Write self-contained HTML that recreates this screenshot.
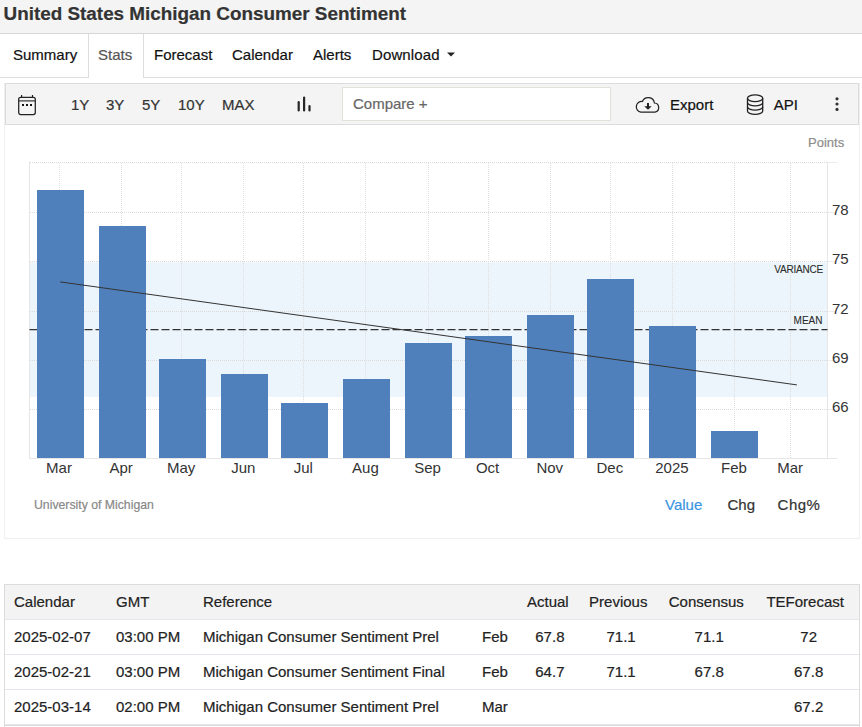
<!DOCTYPE html>
<html><head><meta charset="utf-8">
<style>
html,body{margin:0;padding:0;}
body{width:862px;height:727px;overflow:hidden;position:relative;background:#fff;font-family:"Liberation Sans",sans-serif;color:#222;}
.a{-webkit-text-stroke:0.2px currentColor;}
.a{position:absolute;white-space:nowrap;line-height:1;}
.f15{font-size:15px;}
#hdr{position:absolute;left:0;top:0;width:862px;height:33px;background:#f4f4f4;border-bottom:1px solid #d6d6d6;}
#title{left:3.6px;top:4.5px;font-size:18.87px;font-weight:bold;color:#333;}
#navline{position:absolute;left:0;top:77px;width:862px;height:1px;background:#ddd;}
#stats{position:absolute;left:88px;top:34px;width:54px;height:44px;background:#fff;border-left:1px solid #ddd;border-right:1px solid #ddd;}
#panel{position:absolute;left:4px;top:83px;width:854px;height:455px;border:1px solid #efefef;border-top:none;}
#tb{position:absolute;left:5px;top:83px;width:852px;height:40px;background:#f4f4f4;border:1px solid #dcdcdc;}
#cmp{position:absolute;left:342px;top:87px;width:267px;height:32px;background:#fff;border:1px solid #e2e2d9;}
#tbl{position:absolute;left:4px;top:584px;width:854px;height:160px;border:1px solid #dcdcdc;}
.row{position:absolute;left:5px;width:854px;height:1px;background:#e3e6ea;}
</style></head><body>
<div id="hdr"></div>
<div class="a" id="title">United States Michigan Consumer Sentiment</div>
<div id="navline"></div>
<div id="stats"></div>
<div class="a f15" style="left:13px;top:47px;color:#111;">Summary</div>
<div class="a f15" style="left:98px;top:47px;color:#555;">Stats</div>
<div class="a f15" style="left:154px;top:47px;color:#111;">Forecast</div>
<div class="a f15" style="left:232px;top:47px;color:#111;">Calendar</div>
<div class="a f15" style="left:313px;top:47px;color:#111;">Alerts</div>
<div class="a f15" style="left:372px;top:47px;color:#111;letter-spacing:0.12px;">Download</div>
<svg class="a" style="left:446px;top:52px" width="10" height="5"><path d="M1 0.5 H9 L5 4.5 Z" fill="#222"/></svg>

<div id="panel"></div>
<div id="tb"></div>
<!-- calendar icon -->
<svg class="a" style="left:16px;top:93px" width="22" height="24" viewBox="0 0 22 24">
<rect x="2.7" y="4.3" width="16.6" height="17.3" rx="2" fill="none" stroke="#222" stroke-width="1.25"/>
<line x1="2.7" y1="7.9" x2="19.3" y2="7.9" stroke="#222" stroke-width="1.1"/>
<line x1="5.6" y1="2" x2="5.6" y2="4.5" stroke="#222" stroke-width="1.2"/>
<line x1="16.5" y1="2" x2="16.5" y2="4.5" stroke="#222" stroke-width="1.2"/>
<rect x="6" y="11" width="2" height="2" fill="#111"/>
<rect x="10" y="11" width="2" height="2" fill="#111"/>
<rect x="14" y="11" width="2" height="2" fill="#111"/>
</svg>
<div class="a f15" style="left:71px;top:97px;color:#333;">1Y</div>
<div class="a f15" style="left:106px;top:97px;color:#333;">3Y</div>
<div class="a f15" style="left:142px;top:97px;color:#333;">5Y</div>
<div class="a f15" style="left:178px;top:97px;color:#333;">10Y</div>
<div class="a f15" style="left:222px;top:97px;color:#333;">MAX</div>
<svg class="a" style="left:294px;top:93px" width="20" height="22" viewBox="0 0 20 22">
<line x1="4.7" y1="9.2" x2="4.7" y2="17.4" stroke="#262626" stroke-width="2.2" stroke-linecap="round"/>
<line x1="10.1" y1="4.5" x2="10.1" y2="17.4" stroke="#262626" stroke-width="2.2" stroke-linecap="round"/>
<line x1="15.5" y1="13" x2="15.5" y2="17.4" stroke="#262626" stroke-width="2.2" stroke-linecap="round"/>
</svg>
<div id="cmp"></div>
<div class="a f15" style="left:353px;top:96px;color:#666;">Compare +</div>
<!-- cloud icon -->
<svg class="a" style="left:630px;top:90px" width="36" height="28" viewBox="630 90 36 28">
<path d="M640.9 112.1 H655 A4.6 4.6 0 0 0 654.4 103 A6.25 6.25 0 0 0 642.4 101.5 A5.1 5.1 0 0 0 640.9 112.1 Z" fill="none" stroke="#222" stroke-width="1.25"/>
<rect x="647" y="103" width="2" height="4" fill="#222"/>
<path d="M644.3 106.2 H651.7 L648 109.8 Z" fill="#222"/>
</svg>
<div class="a f15" style="left:670px;top:97px;color:#111;">Export</div>
<!-- db icon -->
<svg class="a" style="left:740px;top:90px" width="30" height="30" viewBox="740 90 30 30">
<g fill="none" stroke="#222" stroke-width="1.3">
<ellipse cx="755.1" cy="98.3" rx="7.6" ry="3.35"/>
<path d="M747.5 98.3 V111 A7.6 3.35 0 0 0 762.7 111 V98.3"/>
<path d="M747.5 102.5 A7.6 3.35 0 0 0 762.7 102.5"/>
<path d="M747.5 106.75 A7.6 3.35 0 0 0 762.7 106.75"/>
</g>
</svg>
<div class="a f15" style="left:773.8px;top:97px;color:#111;">API</div>
<svg class="a" style="left:830px;top:94px" width="14" height="20"><circle cx="7" cy="4.8" r="1.6" fill="#333"/><circle cx="7" cy="10" r="1.6" fill="#333"/><circle cx="7" cy="15.4" r="1.6" fill="#333"/></svg>

<div class="a" style="left:808px;top:136px;font-size:13px;color:#8c8c8c;">Points</div>

<!-- CHART -->
<svg class="a" style="left:0;top:0" width="862" height="727" viewBox="0 0 862 727" id="chart">
<rect x="29.5" y="262.35" width="798.00" height="134.51" fill="#ecf5fb"/>
<line x1="30" y1="409.5" x2="827" y2="409.5" stroke="#dadada" stroke-width="1" stroke-dasharray="1,1"/>
<line x1="828" y1="409.5" x2="837" y2="409.5" stroke="#ececec" stroke-width="1"/>
<line x1="30" y1="360.5" x2="827" y2="360.5" stroke="#dadada" stroke-width="1" stroke-dasharray="1,1"/>
<line x1="828" y1="360.5" x2="837" y2="360.5" stroke="#ececec" stroke-width="1"/>
<line x1="30" y1="311.5" x2="827" y2="311.5" stroke="#dadada" stroke-width="1" stroke-dasharray="1,1"/>
<line x1="828" y1="311.5" x2="837" y2="311.5" stroke="#ececec" stroke-width="1"/>
<line x1="30" y1="261.5" x2="827" y2="261.5" stroke="#dadada" stroke-width="1" stroke-dasharray="1,1"/>
<line x1="828" y1="261.5" x2="837" y2="261.5" stroke="#ececec" stroke-width="1"/>
<line x1="30" y1="212.5" x2="827" y2="212.5" stroke="#dadada" stroke-width="1" stroke-dasharray="1,1"/>
<line x1="828" y1="212.5" x2="837" y2="212.5" stroke="#ececec" stroke-width="1"/>
<line x1="30" y1="162.5" x2="827" y2="162.5" stroke="#dadada" stroke-width="1" stroke-dasharray="1,1"/>
<line x1="828" y1="162.5" x2="837" y2="162.5" stroke="#ececec" stroke-width="1"/>
<line x1="59.5" y1="163" x2="59.5" y2="458" stroke="#dedede" stroke-width="1" stroke-dasharray="1,1"/>
<line x1="121.5" y1="163" x2="121.5" y2="458" stroke="#dedede" stroke-width="1" stroke-dasharray="1,1"/>
<line x1="181.5" y1="163" x2="181.5" y2="458" stroke="#dedede" stroke-width="1" stroke-dasharray="1,1"/>
<line x1="243.5" y1="163" x2="243.5" y2="458" stroke="#dedede" stroke-width="1" stroke-dasharray="1,1"/>
<line x1="303.5" y1="163" x2="303.5" y2="458" stroke="#dedede" stroke-width="1" stroke-dasharray="1,1"/>
<line x1="365.5" y1="163" x2="365.5" y2="458" stroke="#dedede" stroke-width="1" stroke-dasharray="1,1"/>
<line x1="428.5" y1="163" x2="428.5" y2="458" stroke="#dedede" stroke-width="1" stroke-dasharray="1,1"/>
<line x1="488.5" y1="163" x2="488.5" y2="458" stroke="#dedede" stroke-width="1" stroke-dasharray="1,1"/>
<line x1="550.5" y1="163" x2="550.5" y2="458" stroke="#dedede" stroke-width="1" stroke-dasharray="1,1"/>
<line x1="610.5" y1="163" x2="610.5" y2="458" stroke="#dedede" stroke-width="1" stroke-dasharray="1,1"/>
<line x1="672.5" y1="163" x2="672.5" y2="458" stroke="#dedede" stroke-width="1" stroke-dasharray="1,1"/>
<line x1="734.5" y1="163" x2="734.5" y2="458" stroke="#dedede" stroke-width="1" stroke-dasharray="1,1"/>
<line x1="790.5" y1="163" x2="790.5" y2="458" stroke="#dedede" stroke-width="1" stroke-dasharray="1,1"/>
<line x1="29.5" y1="162" x2="29.5" y2="458.5" stroke="#e6e6e6" stroke-width="1"/>
<line x1="827.5" y1="162" x2="827.5" y2="458.5" stroke="#e6e6e6" stroke-width="1"/>
<line x1="29.5" y1="458.5" x2="837" y2="458.5" stroke="#e6e6e6" stroke-width="1"/>
<line x1="29.5" y1="329.60" x2="827.5" y2="329.60" stroke="#333" stroke-width="1.15" stroke-dasharray="8,3"/>
<rect x="37" y="190.00" width="47" height="268.00" fill="#4f80bc"/>
<rect x="99" y="226.00" width="47" height="232.00" fill="#4f80bc"/>
<rect x="159" y="359.00" width="47" height="99.00" fill="#4f80bc"/>
<rect x="221" y="374.00" width="47" height="84.00" fill="#4f80bc"/>
<rect x="281" y="403.00" width="47" height="55.00" fill="#4f80bc"/>
<rect x="343" y="379.00" width="47" height="79.00" fill="#4f80bc"/>
<rect x="405" y="343.00" width="47" height="115.00" fill="#4f80bc"/>
<rect x="465" y="336.00" width="47" height="122.00" fill="#4f80bc"/>
<rect x="527" y="315.00" width="47" height="143.00" fill="#4f80bc"/>
<rect x="587" y="279.00" width="47" height="179.00" fill="#4f80bc"/>
<rect x="649" y="326.00" width="47" height="132.00" fill="#4f80bc"/>
<rect x="711" y="431.00" width="47" height="27.00" fill="#4f80bc"/>
<line x1="60.2" y1="281.9" x2="796.9" y2="384.9" stroke="#333" stroke-width="1"/>
<g font-family="Liberation Sans" font-size="10" fill="#2a2a2a" stroke="#2a2a2a" stroke-width="0.08">
<text x="823" y="272.5" text-anchor="end" letter-spacing="-0.2">VARIANCE</text>
<text x="822.5" y="323.7" text-anchor="end">MEAN</text>
</g>
<g font-family="Liberation Sans" font-size="15" fill="#333">
<text x="832" y="412">66</text>
<text x="832" y="363">69</text>
<text x="832" y="314">72</text>
<text x="832" y="264">75</text>
<text x="832" y="215">78</text>
<text x="59.00" y="473" text-anchor="middle">Mar</text>
<text x="121.09" y="473" text-anchor="middle">Apr</text>
<text x="181.18" y="473" text-anchor="middle">May</text>
<text x="243.28" y="473" text-anchor="middle">Jun</text>
<text x="303.37" y="473" text-anchor="middle">Jul</text>
<text x="365.46" y="473" text-anchor="middle">Aug</text>
<text x="427.55" y="473" text-anchor="middle">Sep</text>
<text x="487.64" y="473" text-anchor="middle">Oct</text>
<text x="549.74" y="473" text-anchor="middle">Nov</text>
<text x="609.83" y="473" text-anchor="middle">Dec</text>
<text x="671.92" y="473" text-anchor="middle">2025</text>
<text x="734.01" y="473" text-anchor="middle">Feb</text>
<text x="790.10" y="473" text-anchor="middle">Mar</text>
</g>
</svg>

<div class="a" style="left:34px;top:499px;font-size:12.25px;color:#888;">University of Michigan</div>
<div class="a f15" style="left:665px;top:497px;color:#3a95e0;">Value</div>
<div class="a f15" style="left:727.5px;top:497px;color:#333;">Chg</div>
<div class="a f15" style="left:777.6px;top:497px;color:#333;letter-spacing:0.45px;">Chg%</div>

<!-- TABLE -->
<div id="tbl"></div>
<div style="position:absolute;left:5px;top:585px;width:854px;height:34px;background:#f3f3f3;"></div>
<div class="row" style="top:619px"></div>
<div class="row" style="top:654px"></div>
<div class="row" style="top:689px"></div>
<div class="row" style="top:724px;background:#e3e6ea;"></div><div class="row" style="top:725px;background:#d9d9d9;"></div>
<div class="a f15" style="left:14px;top:594.2px;color:#222;">Calendar</div>
<div class="a f15" style="left:116px;top:594.2px;color:#222;">GMT</div>
<div class="a f15" style="left:203px;top:594.2px;color:#222;">Reference</div>
<div class="a f15" style="left:487.85px;width:120px;text-align:center;top:594.2px;color:#222;">Actual</div>
<div class="a f15" style="left:558.25px;width:120px;text-align:center;top:594.2px;color:#222;">Previous</div>
<div class="a f15" style="left:646.30px;width:120px;text-align:center;top:594.2px;color:#222;">Consensus</div>
<div class="a f15" style="left:745.20px;width:120px;text-align:center;top:594.2px;color:#222;">TEForecast</div>
<div class="a f15" style="left:14px;top:629.0px;color:#222;">2025-02-07</div>
<div class="a f15" style="left:116px;top:629.0px;color:#222;">03:00 PM</div>
<div class="a f15" style="left:203px;top:629.0px;color:#222;">Michigan Consumer Sentiment Prel</div>
<div class="a f15" style="left:482px;top:629.0px;color:#222;">Feb</div>
<div class="a f15" style="left:489.90px;width:120px;text-align:center;top:629.0px;color:#222;">67.8</div>
<div class="a f15" style="left:561.10px;width:120px;text-align:center;top:629.0px;color:#222;">71.1</div>
<div class="a f15" style="left:649.20px;width:120px;text-align:center;top:629.0px;color:#222;">71.1</div>
<div class="a f15" style="left:748.65px;width:120px;text-align:center;top:629.0px;color:#222;">72</div>
<div class="a f15" style="left:14px;top:663.9px;color:#222;">2025-02-21</div>
<div class="a f15" style="left:116px;top:663.9px;color:#222;">03:00 PM</div>
<div class="a f15" style="left:203px;top:663.9px;color:#222;">Michigan Consumer Sentiment Final</div>
<div class="a f15" style="left:482px;top:663.9px;color:#222;">Feb</div>
<div class="a f15" style="left:489.90px;width:120px;text-align:center;top:663.9px;color:#222;">64.7</div>
<div class="a f15" style="left:561.10px;width:120px;text-align:center;top:663.9px;color:#222;">71.1</div>
<div class="a f15" style="left:649.20px;width:120px;text-align:center;top:663.9px;color:#222;">67.8</div>
<div class="a f15" style="left:748.65px;width:120px;text-align:center;top:663.9px;color:#222;">67.8</div>
<div class="a f15" style="left:14px;top:699.1px;color:#222;">2025-03-14</div>
<div class="a f15" style="left:116px;top:699.1px;color:#222;">02:00 PM</div>
<div class="a f15" style="left:203px;top:699.1px;color:#222;">Michigan Consumer Sentiment Prel</div>
<div class="a f15" style="left:482px;top:699.1px;color:#222;">Mar</div>
<div class="a f15" style="left:748.65px;width:120px;text-align:center;top:699.1px;color:#222;">67.2</div>
</body></html>
